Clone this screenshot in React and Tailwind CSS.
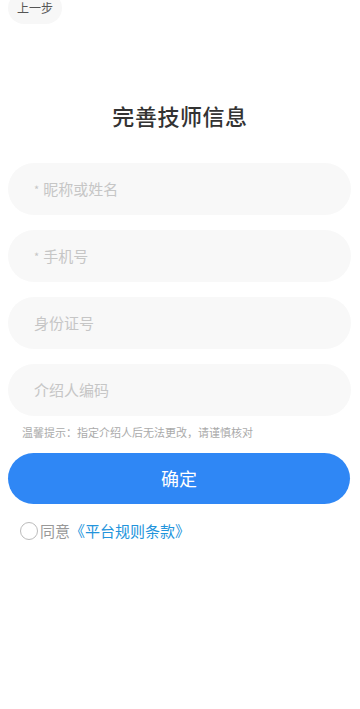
import { useState } from "react";

const FIELDS = [
  { key: "name", label: "昵称或姓名", required: true },
  { key: "phone", label: "手机号", required: true },
  { key: "idcard", label: "身份证号" },
  { key: "referrer", label: "介绍人编码" },
];

export default function App() {
  const [agreed, setAgreed] = useState(false);

  return (
    <div
      className="min-h-[709px] w-[360px] overflow-hidden bg-white"
      style={{ fontFamily: '"Noto Sans CJK SC", "Noto Sans", sans-serif' }}
    >
      <div className="px-2">
        <button className="-mt-[8px] flex h-[32px] items-center rounded-full bg-[#f7f7f7] px-[9px] text-[12px] leading-none text-[#555]">
          上一步
        </button>
      </div>

      <h1 className="mt-[75px] text-center text-[22px] font-medium leading-8 tracking-wide text-[#333]">
        完善技师信息
      </h1>

      <div className="mt-[32px] flex flex-col gap-[15px] px-[8px] pr-[9px]">
        {FIELDS.map((f) => (
          <div
            key={f.key}
            className="flex h-[52px] items-center rounded-full bg-[#f8f8f8] px-[26px] text-[15px] text-[#c6c6c6]"
          >
            {f.required ? <span className="mr-1 text-[11px]">*</span> : null}
            {f.label}
          </div>
        ))}
      </div>

      <p className="mt-[8px] pl-[22px] text-[11px] leading-4 text-[#aaa]">
        温馨提示：指定介绍人后无法更改，请谨慎核对
      </p>

      <div className="mt-[13px] px-[8px] pr-[10px]">
        <button className="h-[51px] w-full rounded-full bg-[#2f87f5] text-[18px] text-white">
          确定
        </button>
      </div>

      <div className="mt-[16px] flex items-center pl-[20px] text-[15px]">
        <button
          onClick={() => setAgreed(!agreed)}
          className={
            agreed
              ? "h-[18px] w-[18px] rounded-full border border-[#2f87f5] bg-[#2f87f5]"
              : "h-[18px] w-[18px] rounded-full border border-[#bbb] bg-white"
          }
        />
        <span className="ml-[2px] text-[#999]">同意</span>
        <span className="text-[#2394dc]">《平台规则条款》</span>
      </div>
    </div>
  );
}
